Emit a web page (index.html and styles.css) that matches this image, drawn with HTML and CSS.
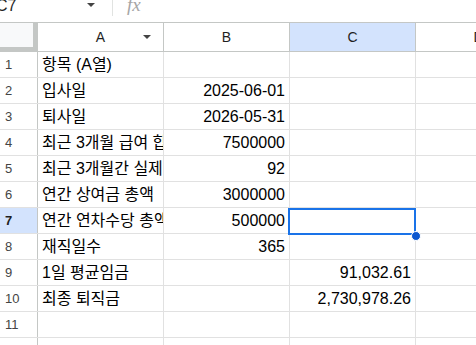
FILE: index.html
```
<!DOCTYPE html>
<html>
    <head>
        <meta charset="utf-8">
        <title>퇴직금 계산</title>
        <link rel="stylesheet" href="styles.css">
    </head>
    <body>
        <div class="topbar">
            <div class="namebox">
                <span class="ref">C7</span>
                <span class="caret"></span>
            </div>
            <div class="sep"></div>
            <div class="fx">fx</div>
        </div>
        <div class="sheet">
            <div class="row head">
                <div class="rh corner"></div>
                <div class="ch">A<span class="caret colcaret"></span></div>
                <div class="ch">B</div>
                <div class="ch on">C</div>
                <div class="ch">D</div>
            </div>
            <div class="row">
                <div class="rh">1</div>
                <div class="c">항목 (A열)</div>
                <div class="c num"></div>
                <div class="c num"></div>
                <div class="c"></div>
            </div>
            <div class="row">
                <div class="rh">2</div>
                <div class="c">입사일</div>
                <div class="c num">2025-06-01</div>
                <div class="c num"></div>
                <div class="c"></div>
            </div>
            <div class="row">
                <div class="rh">3</div>
                <div class="c">퇴사일</div>
                <div class="c num">2026-05-31</div>
                <div class="c num"></div>
                <div class="c"></div>
            </div>
            <div class="row">
                <div class="rh">4</div>
                <div class="c">최근 3개월 급여 합계</div>
                <div class="c num">7500000</div>
                <div class="c num"></div>
                <div class="c"></div>
            </div>
            <div class="row">
                <div class="rh">5</div>
                <div class="c">최근 3개월간 실제 일수</div>
                <div class="c num">92</div>
                <div class="c num"></div>
                <div class="c"></div>
            </div>
            <div class="row">
                <div class="rh">6</div>
                <div class="c">연간 상여금 총액</div>
                <div class="c num">3000000</div>
                <div class="c num"></div>
                <div class="c"></div>
            </div>
            <div class="row">
                <div class="rh on">7</div>
                <div class="c">연간 연차수당 총액</div>
                <div class="c num">500000</div>
                <div class="c num active">
                    <div class="selbox"><span class="handle"></span></div>
                </div>
                <div class="c"></div>
            </div>
            <div class="row">
                <div class="rh">8</div>
                <div class="c">재직일수</div>
                <div class="c num">365</div>
                <div class="c num"></div>
                <div class="c"></div>
            </div>
            <div class="row">
                <div class="rh">9</div>
                <div class="c">1일 평균임금</div>
                <div class="c num"></div>
                <div class="c num">91,032.61</div>
                <div class="c"></div>
            </div>
            <div class="row">
                <div class="rh">10</div>
                <div class="c">최종 퇴직금</div>
                <div class="c num"></div>
                <div class="c num">2,730,978.26</div>
                <div class="c"></div>
            </div>
            <div class="row">
                <div class="rh">11</div>
                <div class="c"></div>
                <div class="c num"></div>
                <div class="c num"></div>
                <div class="c"></div>
            </div>
            <div class="row">
                <div class="rh">12</div>
                <div class="c"></div>
                <div class="c num"></div>
                <div class="c num"></div>
                <div class="c"></div>
            </div>
        </div>
    </body>
</html>
```

FILE: styles.css
```
*{
    box-sizing: border-box;
    padding: 0;
    margin: 0;
}
body{
    width: 476px;
    height: 345px;
    overflow: hidden;
    background: #fff;
    color: #000;
    font-family: "Liberation Sans", "Noto Sans CJK KR", sans-serif;
}
.topbar{
    display: flex;
    align-items: flex-start;
    height: 23px;
    border-bottom: 1px solid #c4c7c5;
    overflow: hidden;
}
.namebox{
    display: flex;
    align-items: flex-start;
    width: 112px;
    margin-left: -4px;
    margin-top: -3px;
}
.ref{
    font-size: 16px;
    line-height: 18px;
    color: #1f1f1f;
}
.namebox .caret{
    margin-left: 71px;
    margin-top: 6px;
}
.caret{
    display: inline-block;
    width: 0;
    height: 0;
    border-left: 4.5px solid transparent;
    border-right: 4.5px solid transparent;
    border-top: 4.5px solid #444;
}
.sep{
    width: 1px;
    height: 16px;
    margin-left: 4px;
    background: #e1e3e1;
}
.fx{
    margin-left: 14px;
    margin-top: -5px;
    font-family: "Liberation Serif", serif;
    font-style: italic;
    font-size: 19px;
    line-height: 20px;
    color: #a6a6a6;
}
.sheet{
    width: 600px;
}
.row{
    display: flex;
    height: 26px;
    border-bottom: 1px solid #e1e1e1;
}
.head{
    height: 29px;
    border-bottom: 1px solid #c4c7c5;
}
.rh{
    width: 38px;
    flex: none;
    padding-left: 5px;
    border-right: 1px solid #c4c7c5;
    font-size: 13px;
    line-height: 25px;
    color: #444;
}
.rh.on{
    background: #d3e3fd;
    color: #1f1f1f;
    font-weight: bold;
}
.corner{
    height: 28px;
    background: #f8f9fa;
    border-right: 5px solid #c4c7c5;
    border-bottom: 4px solid #c4c7c5;
}
.ch{
    position: relative;
    width: 126px;
    flex: none;
    text-align: center;
    border-right: 1px solid #c4c7c5;
    font-size: 14px;
    line-height: 28px;
    color: #1f1f1f;
}
.ch.on{
    background: #d3e3fd;
}
.colcaret{
    position: absolute;
    right: 12px;
    top: 12px;
}
.c{
    width: 126px;
    flex: none;
    padding: 1px 4px 0;
    border-right: 1px solid #e1e1e1;
    font-size: 16px;
    line-height: 24px;
    white-space: nowrap;
    overflow: hidden;
}
.num{
    text-align: right;
}
.active{
    position: relative;
    overflow: visible;
}
.selbox{
    position: absolute;
    left: -2px;
    top: 0;
    width: 128px;
    height: 27px;
    border: 2px solid #1a73e8;
}
.handle{
    position: absolute;
    left: 121px;
    top: 21px;
    width: 10px;
    height: 10px;
    border-radius: 50%;
    background: #0b57d0;
    border: 1px solid #fff;
}
```
